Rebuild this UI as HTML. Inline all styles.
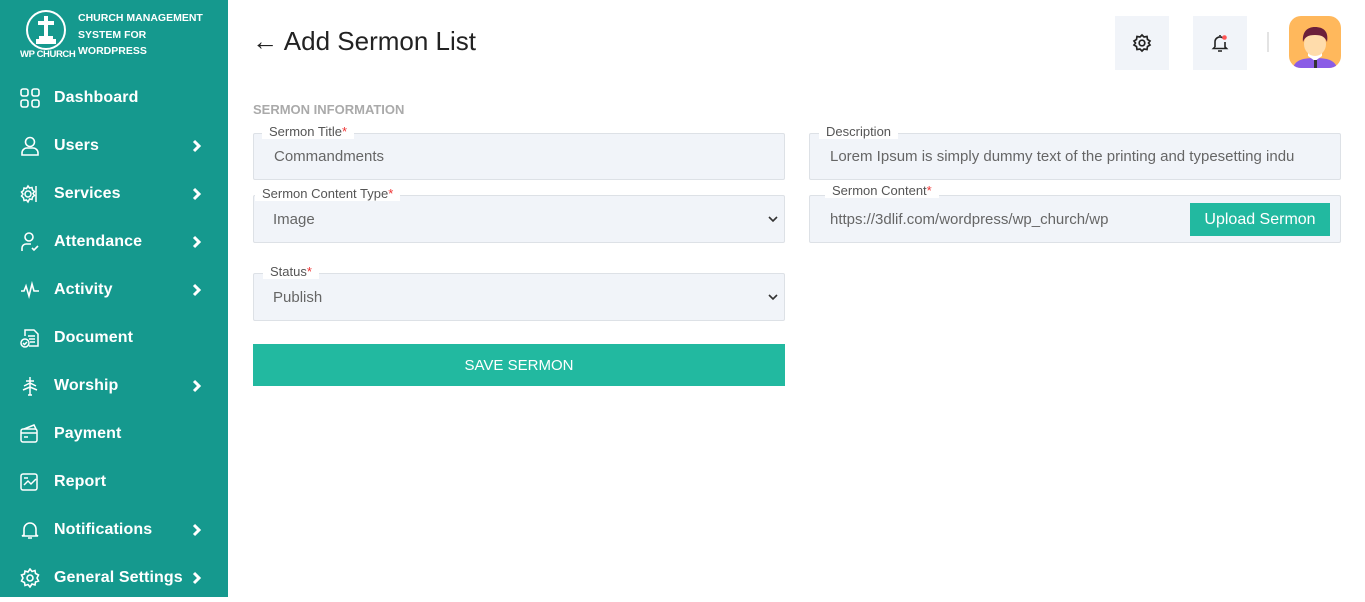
<!DOCTYPE html>
<html><head><meta charset="utf-8"><style>
*{box-sizing:border-box;margin:0;padding:0}
body{width:1365px;height:597px;overflow:hidden;background:#fff;font-family:"Liberation Sans",sans-serif;position:relative}
.sb{position:absolute;left:0;top:0;width:228px;height:597px;background:#15998e;color:#fff}
.item{position:absolute;left:0;width:228px;height:48px;display:flex;align-items:center}
.item svg.ic{position:absolute;left:20px;width:20px;height:20px}
.item span{position:absolute;left:54px;font-size:16px;font-weight:bold;letter-spacing:0.1px}
.item svg.ch{position:absolute;left:192px;width:10px;height:14px}
.lbl{position:absolute;background:#fff;font-size:13px;color:#555;padding:0 7px;height:14px;line-height:14px}
.lbl b{color:#e33;font-weight:normal}
.fld{position:absolute;background:#f1f4f9;border:1px solid #dde1e6;border-radius:2px;font-size:15px;color:#666;padding-left:20px;display:flex;align-items:center}
.sel{position:absolute;right:6px;top:19px}
</style></head><body>
<div class="sb">
<svg style="position:absolute;left:25px;top:9px" width="42" height="42" viewBox="0 0 42 42"><circle cx="21" cy="21" r="19" fill="none" stroke="#fff" stroke-width="2"/><rect x="19" y="7" width="4" height="20" fill="#fff"/><rect x="13" y="12" width="16" height="4" fill="#fff"/><path d="M11 30h20v5H11z M14 27h14v3H14z" fill="#fff"/></svg>
<div style="position:absolute;left:20px;top:49px;font-size:9.5px;font-weight:bold;letter-spacing:-0.4px">WP CHURCH</div>
<div style="position:absolute;left:78px;top:10px;font-size:10.5px;font-weight:bold;line-height:16.5px">CHURCH MANAGEMENT<br>SYSTEM FOR<br>WORDPRESS</div>
<svg width="0" height="0" style="position:absolute"><defs><path id="chv" d="M2 2l5 5-5 5" fill="none" stroke="#fff" stroke-width="3"/></defs></svg>
<div class="item" style="top:74px"><svg class="ic" viewBox="0 0 20 20" fill="none" stroke="#fff" stroke-width="1.6"><rect x="1" y="1" width="7" height="7" rx="2"/><rect x="12" y="1" width="7" height="7" rx="2"/><rect x="1" y="12" width="7" height="7" rx="2"/><rect x="12" y="12" width="7" height="7" rx="2"/></svg><span>Dashboard</span></div>
<div class="item" style="top:122px"><svg class="ic" viewBox="0 0 20 20" fill="none" stroke="#fff" stroke-width="1.6"><circle cx="10" cy="6" r="4.5"/><path d="M2 19v-2a5 5 0 0 1 5-5h6a5 5 0 0 1 5 5v2z"/></svg><span>Users</span><svg class="ch" viewBox="0 0 10 14"><use href="#chv"/></svg></div>
<div class="item" style="top:170px"><svg class="ic" viewBox="0 0 20 20" fill="none" stroke="#fff" stroke-width="1.5"><circle cx="8" cy="10" r="3"/><path d="M8 2l1.5 2 2.5-.5.5 2.5 2 1.5-1.5 2 1.5 2-2 1.5-.5 2.5-2.5-.5L8 18l-1.5-2-2.5.5-.5-2.5L1.5 12 3 10 1.5 8l2-1.5.5-2.5 2.5.5z"/><path d="M16 2v16"/></svg><span>Services</span><svg class="ch" viewBox="0 0 10 14"><use href="#chv"/></svg></div>
<div class="item" style="top:218px"><svg class="ic" viewBox="0 0 20 20" fill="none" stroke="#fff" stroke-width="1.6"><circle cx="9" cy="5" r="4"/><path d="M2 19v-3a4 4 0 0 1 4-4h5M12 16l2 2 4-4"/></svg><span>Attendance</span><svg class="ch" viewBox="0 0 10 14"><use href="#chv"/></svg></div>
<div class="item" style="top:266px"><svg class="ic" viewBox="0 0 20 20" fill="none" stroke="#fff" stroke-width="1.6"><path d="M1 11h3l2-5 3 10 3-12 2 7h5"/></svg><span>Activity</span><svg class="ch" viewBox="0 0 10 14"><use href="#chv"/></svg></div>
<div class="item" style="top:314px"><svg class="ic" viewBox="0 0 20 20" fill="none" stroke="#fff" stroke-width="1.5"><path d="M5 8V2h9l4 4v12H9"/><path d="M8 8h7M9 11h6M10 14h5"/><circle cx="5" cy="15" r="4"/><path d="M3 15l1.5 1.5L7 14"/></svg><span>Document</span></div>
<div class="item" style="top:362px"><svg class="ic" viewBox="0 0 20 20" fill="none" stroke="#fff" stroke-width="1.5"><path d="M10 1v18M6 5h8M4 10l6-3 6 3M3 14l7-3 7 3M8 19h4"/></svg><span>Worship</span><svg class="ch" viewBox="0 0 10 14"><use href="#chv"/></svg></div>
<div class="item" style="top:410px"><svg class="ic" viewBox="0 0 20 20" fill="none" stroke="#fff" stroke-width="1.5"><rect x="1" y="5" width="16" height="13" rx="2"/><path d="M4 5l10-4 2 4M1 9h16M4 13h4"/></svg><span>Payment</span></div>
<div class="item" style="top:458px"><svg class="ic" viewBox="0 0 20 20" fill="none" stroke="#fff" stroke-width="1.5"><rect x="1" y="2" width="16" height="16" rx="2"/><path d="M4 13l4-4 3 3 5-5M4 6h4"/></svg><span>Report</span></div>
<div class="item" style="top:506px"><svg class="ic" viewBox="0 0 20 20" fill="none" stroke="#fff" stroke-width="1.6"><path d="M4 15V9a6 6 0 0 1 12 0v6l2 1H2zM8 18h4"/></svg><span>Notifications</span><svg class="ch" viewBox="0 0 10 14"><use href="#chv"/></svg></div>
<div class="item" style="top:554px"><svg class="ic" viewBox="0 0 20 20" fill="none" stroke="#fff" stroke-width="1.6"><circle cx="10" cy="10" r="3"/><path d="M10 1l2 2.5 3-1 .5 3 3 1.5-1.5 3 1.5 3-3 1-.5 3-3-1L10 19l-2-2.5-3 1-.5-3-3-1.5 1.5-3L1.5 7l3-1 .5-3 3 1z"/></svg><span>General Settings</span><svg class="ch" viewBox="0 0 10 14"><use href="#chv"/></svg></div>
</div>

<div style="position:absolute;left:252px;top:26px;font-size:26px;color:#222">&larr; Add Sermon List</div>
<div style="position:absolute;left:1115px;top:16px;width:54px;height:54px;background:#f1f4f9"><svg style="position:absolute;left:17px;top:17px" width="20" height="20" viewBox="0 0 20 20" fill="none" stroke="#222" stroke-width="1.7"><circle cx="10" cy="10" r="2.8"/><path d="M10 2l2 2 3-.5.5 3 2.5 1.5-1.5 2 1.5 2-2.5 1.5-.5 3-3-.5-2 2-2-2-3 .5-.5-3L2 12l1.5-2L2 8l2.5-1.5.5-3 3 .5z"/></svg></div>
<div style="position:absolute;left:1193px;top:16px;width:54px;height:54px;background:#f1f4f9"><svg style="position:absolute;left:17px;top:17px" width="20" height="20" viewBox="0 0 20 20" fill="none" stroke="#222" stroke-width="1.6"><path d="M5 14V9a5 5 0 0 1 8-4M15 9v5l1.5 1.5h-13L5 14M8 18h4M10 3V2"/><circle cx="14.5" cy="4.5" r="2.3" fill="#f55" stroke="none"/></svg></div>
<div style="position:absolute;left:1267px;top:32px;width:2px;height:20px;background:#e3e3e3"></div>
<div style="position:absolute;left:1289px;top:16px;width:52px;height:52px;background:#ffb85c;border-radius:12px;overflow:hidden"><svg width="52" height="52" viewBox="0 0 52 52"><path d="M4 52c2-8 10-10 22-10s20 2 22 10z" fill="#8a5ce6"/><path d="M19 40l7 5 7-5v-6H19z" fill="#fff"/><rect x="25" y="44" width="3" height="8" fill="#333"/><ellipse cx="26" cy="28" rx="11" ry="12" fill="#ffdcab"/><path d="M14 26c-1-10 4-15 12-15s14 4 12 15c-2-5-5-7-12-7s-10 2-12 7z" fill="#6b1f3a"/></svg></div>

<div style="position:absolute;left:253px;top:102px;font-size:13px;font-weight:bold;color:#aaa">SERMON INFORMATION</div>

<div class="fld" style="left:253px;top:133px;width:532px;height:47px">Commandments</div>
<div class="lbl" style="left:262px;top:125px">Sermon Title<b>*</b></div>
<div class="fld" style="left:253px;top:195px;width:532px;height:48px;padding-left:19px">Image<svg class="sel" width="10" height="8" viewBox="0 0 10 8"><path d="M1 2l4 4 4-4" fill="none" stroke="#333" stroke-width="1.6"/></svg></div>
<div class="lbl" style="left:255px;top:187px">Sermon Content Type<b>*</b></div>
<div class="fld" style="left:253px;top:273px;width:532px;height:48px;padding-left:19px">Publish<svg class="sel" width="10" height="8" viewBox="0 0 10 8"><path d="M1 2l4 4 4-4" fill="none" stroke="#333" stroke-width="1.6"/></svg></div>
<div class="lbl" style="left:263px;top:265px">Status<b>*</b></div>
<div style="position:absolute;left:253px;top:344px;width:532px;height:42px;background:#22b9a0;color:#fff;font-size:15px;display:flex;align-items:center;justify-content:center">SAVE SERMON</div>

<div class="fld" style="left:809px;top:133px;width:532px;height:47px;padding-left:20px;white-space:nowrap;overflow:hidden">Lorem Ipsum is simply dummy text of the printing and typesetting indu</div>
<div class="lbl" style="left:819px;top:125px">Description</div>
<div class="fld" style="left:809px;top:195px;width:532px;height:48px;padding-left:20px">https://3dlif.com/wordpress/wp_church/wp<div style="position:absolute;left:380px;top:7px;width:140px;height:33px;background:#22b9a0;color:#fff;font-size:16px;display:flex;align-items:center;justify-content:center">Upload Sermon</div></div>
<div class="lbl" style="left:825px;top:184px">Sermon Content<b>*</b></div>
</body></html>
